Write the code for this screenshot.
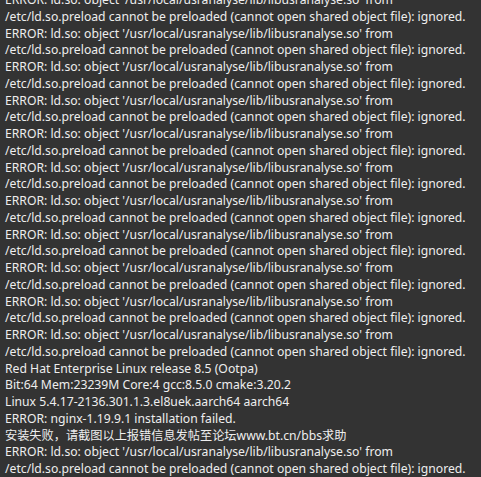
const err = "ERROR: ld.so: object '/usr/local/usranalyse/lib/libusranalyse.so' from";
const pre = "/etc/ld.so.preload cannot be preloaded (cannot open shared object file): ignored.";

const lines: string[] = [];
for (let i = 0; i < 11; i++) {
  lines.push(err, pre);
}
lines.push(
  'Red Hat Enterprise Linux release 8.5 (Ootpa)',
  'Bit:64 Mem:23239M Core:4 gcc:8.5.0 cmake:3.20.2',
  'Linux 5.4.17-2136.301.1.3.el8uek.aarch64 aarch64',
  'ERROR: nginx-1.19.9.1 installation failed.',
  '安装失败，请截图以上报错信息发帖至论坛www.bt.cn/bbs求助',
  err,
  pre,
);

export default function App() {
  return (
    <div className="w-[481px] h-[477px] overflow-hidden bg-[#333333]">
      <div
        className="-mt-[8px] px-[5px] text-[12.2px] leading-[16.75px] text-[#eeeeee] whitespace-pre"
        style={{ fontFamily: '"Noto Sans", "Noto Sans CJK SC", sans-serif' }}
      >
        {lines.map((l, i) => (
          <div key={i}>{l}</div>
        ))}
      </div>
    </div>
  );
}
